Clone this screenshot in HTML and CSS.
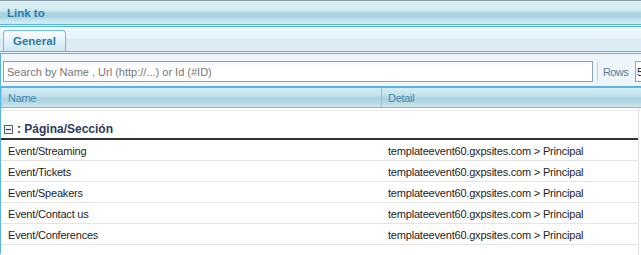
FILE: index.html
```html
<!DOCTYPE html>
<html>
<head>
<meta charset="utf-8">
<link rel="stylesheet" href="styles.css">
</head>
<body>
<div class="titlebar"><span class="title">Link to</span></div>
<div class="tabstrip"><div class="tab">General</div></div>
<div class="panel">
  <div class="toolbar">
    <input class="search" type="text" placeholder="Search by Name , Url (http://...) or Id (#ID)">
    <span class="sep"></span>
    <span class="rows">Rows</span>
    <input class="rowsinput" type="text" value="5">
  </div>
  <div class="grid">
    <div class="ghead">
      <div class="hcell c1">Name</div>
      <div class="hcell c2">Detail</div>
    </div>
    <div class="gbody">
      <div class="group">
        <svg class="toggle" width="9" height="9" viewBox="0 0 9 9"><rect x="0.5" y="0.5" width="8" height="8" fill="#eef2f8" stroke="#4f6078"/><rect x="2" y="4" width="5" height="1" fill="#2c3b58"/></svg>
        <span>: Página/Sección</span>
      </div>
      <div class="row"><div class="cell c1">Event/Streaming</div><div class="cell c2">templateevent60.gxpsites.com &gt; Principal</div></div>
      <div class="row"><div class="cell c1">Event/Tickets</div><div class="cell c2">templateevent60.gxpsites.com &gt; Principal</div></div>
      <div class="row"><div class="cell c1">Event/Speakers</div><div class="cell c2">templateevent60.gxpsites.com &gt; Principal</div></div>
      <div class="row"><div class="cell c1">Event/Contact us</div><div class="cell c2">templateevent60.gxpsites.com &gt; Principal</div></div>
      <div class="row"><div class="cell c1">Event/Conferences</div><div class="cell c2">templateevent60.gxpsites.com &gt; Principal</div></div>
    </div>
  </div>
</div>
</body>
</html>
```

FILE: styles.css
```css
* { box-sizing: border-box; }
html, body { margin: 0; padding: 0; }
body {
  width: 641px;
  height: 255px;
  overflow: hidden;
  background: #e8f5fb;
  font-family: "Liberation Sans", Arial, sans-serif;
}
.titlebar {
  height: 25px;
  border-top: 1px solid #8c9caa;
  border-bottom: 1px solid #5ab4e0;
  background: linear-gradient(to bottom, #dbf0f3 0px, #d2ebf0 9px, #acd4e1 12px, #a9d2df 16px, #c5e4ec 19px, #d3ecf2 23px);
  padding-left: 7px;
  display: flex;
  align-items: center;
}
.title {
  font-weight: bold;
  font-size: 11.5px;
  color: #2b7ca6;
}
.tabstrip {
  margin-top: 1px;
  height: 26px;
  border-top: 1px solid #5ab4e0;
  border-bottom: 1px solid #5ab4e0;
  background: linear-gradient(to bottom, #eef8fe 0px, #e8f4fb 11px, #dcecf5 12px, #dcecf5 24px);
  padding: 3px 0 0 3px;
  display: flex;
  align-items: flex-end;
}
.tab {
  width: 63px;
  height: 21px;
  border: 1px solid #72bde3;
  border-bottom: none;
  border-radius: 4px 4px 0 0;
  background: linear-gradient(to bottom, #fafdff 0%, #e6f3fa 50%, #cde6f3 100%);
  padding-left: 9px;
  font-weight: bold;
  font-size: 11.5px;
  line-height: 20px;
  color: #2a7aa5;
}
.panel {
  margin-top: 1px;
  border-top: 1px solid #5ab4e0;
  border-left: 1px solid #5ab4e0;
  background: #eef6fc;
  height: 201px;
}
.toolbar {
  height: 32px;
  padding: 7px 0 4px 2px;
  display: flex;
  align-items: center;
  overflow: hidden;
}
.toolbar > * { flex: none; }
.search {
  width: 590px;
  height: 21px;
  margin: 0;
  border: 1px solid #8ba4bf;
  background: linear-gradient(to bottom, #f4f6f8 0px, #ffffff 4px);
  padding: 0 0 0 3px;
  font-family: "Liberation Sans", Arial, sans-serif;
  font-size: 11px;
  color: #333;
  outline: none;
}
.search::placeholder { color: #777; }
.sep {
  width: 1px;
  height: 19px;
  margin-left: 4px;
  background: #a9d3ee;
}
.rows {
  margin-left: 5px;
  font-size: 11px;
  letter-spacing: -0.6px;
  color: #5c7b93;
}
.rowsinput {
  width: 30px;
  height: 21px;
  margin: 0 0 0 7px;
  border: 1px solid #8ba4bf;
  background: #fff;
  padding: 0 0 0 1px;
  font-family: "Liberation Sans", Arial, sans-serif;
  font-size: 11px;
  color: #222;
}
.grid { background: #fff; height: 169px; }
.ghead {
  height: 22px;
  border-top: 2px solid #5ab4e0;
  border-bottom: 1px solid #72bfe2;
  background: linear-gradient(to bottom, #d6edf3 0px, #c3e2eb 7px, #abd2de 11px, #b8dbe5 15px, #cfe8ef 19px);
  display: flex;
}
.hcell {
  font-size: 11px;
  letter-spacing: -0.3px;
  color: #3a8ab0;
  line-height: 19px;
  padding-top: 1px;
}
.ghead .c1 {
  width: 381px;
  border-left: 1px solid #9dd0e8;
  border-right: 1px solid #7cc4e4;
  padding-left: 6px;
}
.ghead .c2 { padding-left: 6px; }
.gbody {
  width: 638px;
  height: 147px;
  border-right: 1px solid #e2e2e2;
  padding-top: 2px;
}
.group {
  height: 30px;
  border-top: 1px solid #e8e8e8;
  border-bottom: 2px solid #333;
  padding: 10px 0 0 3px;
  display: flex;
  align-items: flex-start;
  font-weight: bold;
  font-size: 12px;
  line-height: 16px;
  color: #2c3b58;
}
.toggle { margin: 4px 4px 0 0; flex: none; }
.row {
  height: 21px;
  border-bottom: 1px solid #e4e4e4;
  display: flex;
  font-size: 11px;
  letter-spacing: -0.2px;
  color: #1e1e1e;
}
.cell { padding-top: 2px; line-height: 18px; }
.row .c1 { width: 381px; padding-left: 7px; }
.row .c2 { padding-left: 6px; }
```
